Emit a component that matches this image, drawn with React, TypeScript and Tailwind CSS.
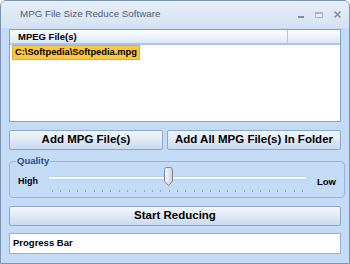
import React from "react";

const font = { fontFamily: '"Liberation Sans", Arial, sans-serif' };

function WinButton({ children, className = "" }: { children: React.ReactNode; className?: string }) {
  return (
    <button
      className={`flex h-[20px] items-center justify-center rounded-[2px] border border-[#8ba7cc] bg-gradient-to-b from-[#f3f7fc] via-[#dfe9f6] to-[#c8daf0] text-[11.5px] font-bold text-black ${className}`}
    >
      {children}
    </button>
  );
}

export default function App() {
  const ticks = Array.from({ length: 31 });
  return (
    <div
      style={font}
      className="flex h-[264px] w-[350px] flex-col overflow-hidden rounded-t-[6px] border border-[#7d93b2] bg-[#c4dbf5]"
    >
      {/* Title bar */}
      <div className="flex h-[27px] shrink-0 items-center bg-gradient-to-b from-[#e6eef8] to-[#d6e2f1] pl-[19px] pr-[8px]">
        <span className="flex-1 text-[9.8px] text-[#4f5f75]">MPG File Size Reduce Software</span>
        <div className="flex items-center gap-[11px]">
          <span className="mt-[4px] block h-[2px] w-[6px] bg-[#7d8ca3]" />
          <span className="block h-[6px] w-[8px] border border-[#aab5c6] border-t-[2px] bg-[#e7edf5]" />
          <svg width="7" height="7" viewBox="0 0 7 7">
            <path d="M0.5 0.5 L6.5 6.5 M6.5 0.5 L0.5 6.5" stroke="#7d8ca3" strokeWidth="1.5" />
          </svg>
        </div>
      </div>

      {/* Client area */}
      <div className="flex flex-1 flex-col px-[8px] pt-[1px]">
        {/* List view */}
        <div className="flex h-[93px] flex-col border border-[#7fa2cc] bg-white">
          <div className="flex h-[15px] shrink-0 border-b-[2px] border-[#a9c5e8] bg-gradient-to-b from-[#ffffff] to-[#dbe8f8]">
            <div className="w-[278px] border-r border-[#a9c5e8] pl-[8px] text-[9.5px] font-bold leading-[13px] text-black">
              MPEG File(s)
            </div>
          </div>
          <div className="flex items-start pl-[3px] pt-[1px]">
            <span className="h-[13px] bg-[#fcc640] px-[2px] text-[9.3px] font-bold leading-[13px] text-black outline outline-1 outline-[#e7a928]">
              C:\Softpedia\Softpedia.mpg
            </span>
          </div>
        </div>

        {/* Buttons */}
        <div className="mt-[8px] flex gap-[4px]">
          <WinButton className="w-[154px]">Add MPG File(s)</WinButton>
          <WinButton className="flex-1">Add All MPG File(s) In Folder</WinButton>
        </div>

        {/* Quality group */}
        <fieldset className="mt-[5px] h-[43px] rounded-[4px] border border-[#97b5dc] px-[8px]">
          <legend className="ml-[-2px] px-[1px] text-[9.5px] font-bold leading-[12px] text-[#1f4d8c]">Quality</legend>
          <div className="flex items-start">
            <span className="mt-[8px] w-[30px] text-[9px] font-bold text-black">High</span>
            <div className="relative mt-[9px] h-[24px] w-[259px]">
              <div className="h-[4px] w-full rounded-[1px] border border-[#bcd3ee] bg-[#f7fbff]" />
              <div className="absolute left-[116px] top-[-9px]">
                <svg width="9" height="19" viewBox="0 0 9 19">
                  <defs>
                    <linearGradient id="th" x1="0" x2="1" y1="0" y2="0">
                      <stop offset="0" stopColor="#ffffff" />
                      <stop offset="1" stopColor="#c7ced8" />
                    </linearGradient>
                  </defs>
                  <path d="M0.5 2.5 Q0.5 0.5 2.5 0.5 L6.5 0.5 Q8.5 0.5 8.5 2.5 L8.5 14 L4.5 18.5 L0.5 14 Z" fill="url(#th)" stroke="#7b8797" />
                </svg>
              </div>
              <div className="mt-[10px] flex justify-between px-[4px]">
                {ticks.map((_, i) => (
                  <span key={i} className="block h-[2px] w-px bg-[#8ea6c6]" />
                ))}
              </div>
            </div>
            <span className="ml-[10px] mt-[8px] text-[9.5px] font-bold text-black">Low</span>
          </div>
        </fieldset>

        <WinButton className="mt-[8px] w-full">Start Reducing</WinButton>

        {/* Progress box */}
        <div className="mt-[7px] flex h-[21px] items-center border border-[#8fb0da] bg-white pl-[3px] text-[9.5px] font-bold text-black">
          Progress Bar
        </div>
      </div>
    </div>
  );
}
